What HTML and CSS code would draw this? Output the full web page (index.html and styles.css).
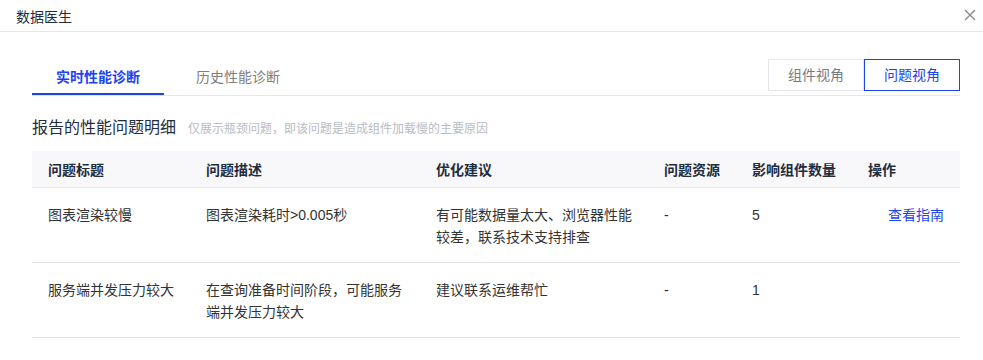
FILE: index.html
```html
<!DOCTYPE html>
<html>
<head>
    <title>数据医生</title>
    <link rel="stylesheet" href="styles.css">
</head>
<body>
    <div id="dialogo">
        <div class="cabecera">
            <span class="titulo">数据医生</span>
            <svg class="cerrar" width="12" height="12" viewBox="0 0 12 12">
                <path d="M1 1 L11 11 M11 1 L1 11" stroke="#8a8a8a" stroke-width="1.4" fill="none"/>
            </svg>
        </div>
        <div class="contenido">
            <div class="barra">
                <div class="pestanas">
                    <div class="pestana activa">实时性能诊断</div>
                    <div class="pestana">历史性能诊断</div>
                </div>
                <div class="vistas">
                    <div class="vista">组件视角</div>
                    <div class="vista activa">问题视角</div>
                </div>
            </div>
            <div class="seccion">
                <span class="seccion-titulo">报告的性能问题明细</span>
                <span class="seccion-nota">仅展示瓶颈问题，即该问题是造成组件加载慢的主要原因</span>
            </div>
            <table class="tabla">
                <colgroup>
                    <col style="width:158px">
                    <col style="width:230px">
                    <col style="width:228px">
                    <col style="width:88px">
                    <col style="width:116px">
                    <col style="width:108px">
                </colgroup>
                <thead>
                    <tr>
                        <th>问题标题</th>
                        <th>问题描述</th>
                        <th>优化建议</th>
                        <th>问题资源</th>
                        <th>影响组件数量</th>
                        <th>操作</th>
                    </tr>
                </thead>
                <tbody>
                    <tr>
                        <td>图表渲染较慢</td>
                        <td>图表渲染耗时&gt;0.005秒</td>
                        <td>有可能数据量太大、浏览器性能较差，联系技术支持排查</td>
                        <td>-</td>
                        <td>5</td>
                        <td class="accion"><a href="#">查看指南</a></td>
                    </tr>
                    <tr>
                        <td>服务端并发压力较大</td>
                        <td>在查询准备时间阶段，可能服务端并发压力较大</td>
                        <td>建议联系运维帮忙</td>
                        <td>-</td>
                        <td>1</td>
                        <td class="accion"></td>
                    </tr>
                </tbody>
            </table>
        </div>
    </div>
</body>
</html>
```

FILE: styles.css
```css
body {
    font-family: 'Liberation Sans', 'Noto Sans CJK SC', sans-serif;
    background-color: #ffffff;
    margin: 0;
    color: #333333;
}
#dialogo {
    width: 983px;
    height: 360px;
    overflow: hidden;
}
.cabecera {
    height: 32px;
    border-bottom: 1px solid #e6e6f0;
    display: flex;
    align-items: center;
    justify-content: space-between;
    padding: 0 7px 0 16px;
    box-sizing: border-box;
}
.titulo {
    font-size: 14px;
    color: #1f2d3d;
}
.cerrar {
    margin-top: -2px;
}
.contenido {
    padding: 26px 23px 0 32px;
}
.barra {
    display: flex;
    justify-content: space-between;
    align-items: flex-end;
    height: 37px;
    border-bottom: 1px solid #e6e6f0;
}
.pestanas {
    display: flex;
}
.pestana {
    font-size: 14px;
    color: #808080;
    height: 36px;
    line-height: 36px;
    width: 132px;
    text-align: center;
    box-sizing: border-box;
}
.pestana.activa {
    color: #1b44f0;
    font-weight: bold;
    border-bottom: 2px solid #1b44f0;
    margin-bottom: -1px;
}
.pestana + .pestana {
    width: 120px;
    text-align: right;
    padding-right: 4px;
}
.vistas {
    display: flex;
    align-self: flex-start;
    margin-top: 1px;
}
.vista {
    width: 96px;
    height: 32px;
    line-height: 30px;
    box-sizing: border-box;
    text-align: center;
    font-size: 14px;
    color: #777a85;
    border: 1px solid #e6e6f0;
}
.vista.activa {
    color: #1b44f0;
    border-color: #1b44f0;
}
.seccion {
    margin-top: 18px;
    display: flex;
    align-items: baseline;
}
.seccion-titulo {
    font-size: 16px;
    color: #1f2d3d;
}
.seccion-nota {
    font-size: 12px;
    color: #b8bcc6;
    margin-left: 12px;
}
.tabla {
    margin-top: 13px;
    width: 928px;
    border-collapse: collapse;
    table-layout: fixed;
    font-size: 14px;
}
.tabla th {
    background-color: #f8f8fa;
    color: #1f2d3d;
    font-weight: bold;
    text-align: left;
    height: 36px;
    padding: 0 16px;
    border-bottom: 1px solid #e8e8ec;
}
.tabla td {
    vertical-align: top;
    padding: 16px 16px 0 16px;
    height: 75px;
    box-sizing: border-box;
    line-height: 22px;
    color: #333333;
    border-bottom: 1px solid #e0e0e4;
}
.tabla td.accion {
    text-align: right;
}
.accion a {
    color: #1b44f0;
    text-decoration: none;
}
```
